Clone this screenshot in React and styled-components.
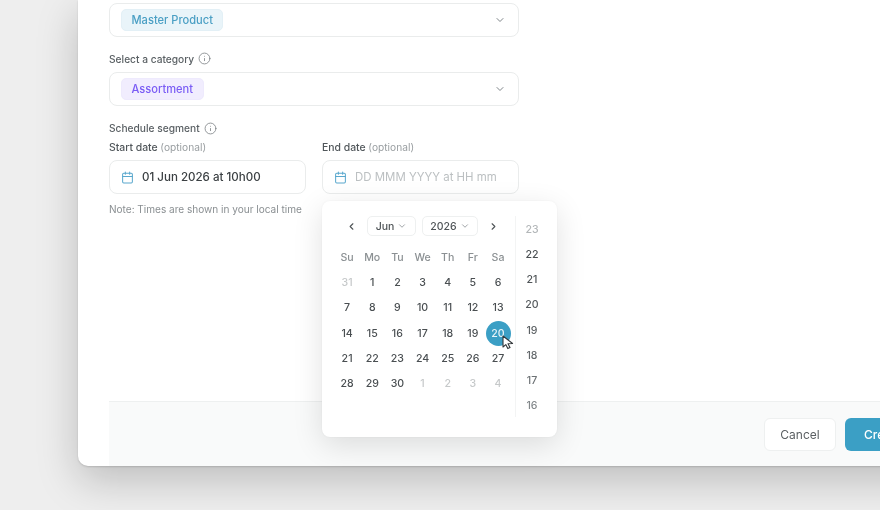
import React from "react";
import styled, { createGlobalStyle } from "styled-components";
import { Calendar, ChevronDown, ChevronLeft, ChevronRight, Info } from "lucide-react";

const Global = createGlobalStyle`
  html, body { margin: 0; padding: 0; background: #eeeeee; }
  body { font-family: Inter, "Liberation Sans", sans-serif; overflow: hidden; }
`;

const Page = styled.div`
  width: 880px;
  height: 510px;
  overflow: hidden;
  background: #eeeeee;
  filter: blur(0.6px);
`;

const Modal = styled.div`
  position: relative;
  width: 860px;
  margin-left: 78px;
  height: 466px;
  box-sizing: border-box;
  padding: 2.5px 0 0 31px;
  display: flex;
  flex-direction: column;
  background: #fff;
  border-radius: 0 0 10px 10px;
  box-shadow: 0 14px 42px rgba(0, 0, 0, 0.21), 0 1px 2px rgba(0, 0, 0, 0.14);
`;

const Form = styled.div`
  width: 410px;
  display: flex;
  flex-direction: column;
`;

const SelectBox = styled.div`
  height: 34.5px;
  box-sizing: border-box;
  border: 1px solid #eaecec;
  border-radius: 8px;
  display: flex;
  align-items: center;
  justify-content: space-between;
  padding: 0 12px 0 11px;
  color: #7f868a;
`;

const Tag = styled.span`
  height: 22px;
  display: inline-flex;
  align-items: center;
  padding: 0 9.5px;
  border-radius: 5px;
  font-size: 11.1px;
  font-weight: 500;
  color: ${(p) => p.$fg};
  background: ${(p) => p.$bg};
  border: 1px solid ${(p) => p.$line};
  box-sizing: border-box;
`;

const GroupLabel = styled.div`
  display: flex;
  align-items: center;
  gap: 4px;
  height: 14px;
  margin: ${(p) => p.$top}px 0 ${(p) => p.$bottom}px;
  font-size: 10.2px;
  font-weight: 500;
  color: #5a6064;
`;

const InfoIcon = styled(Info)`
  width: 13px;
  height: 13px;
  color: #7c8185;
  stroke-width: 1.5;
`;

const DateRow = styled.div`
  display: flex;
  justify-content: space-between;
`;

const DateField = styled.div`
  width: 197px;
`;

const FieldLabel = styled.div`
  height: 14px;
  margin-bottom: 6px;
  font-size: 10.4px;
  line-height: 14px;
  font-weight: 500;
  color: #51575b;
  span {
    font-size: 10.2px;
    font-weight: 400;
    color: #999ea1;
  }
`;

const DateInput = styled.div`
  height: 34px;
  box-sizing: border-box;
  border: 1px solid #eaecec;
  border-radius: 8px;
  display: flex;
  align-items: center;
  gap: 8px;
  padding-left: 11px;
  font-size: ${(p) => (p.$empty ? "11.45px" : "11.55px")};
  font-weight: ${(p) => (p.$empty ? 400 : 500)};
  color: ${(p) => (p.$empty ? "#bcc0c2" : "#3b4043")};
  svg {
    width: 13px;
    height: 13px;
    flex: none;
    color: #5aa8cd;
    stroke-width: 1.9;
  }
`;

const Note = styled.div`
  margin-top: 8px;
  height: 14px;
  line-height: 14px;
  font-size: 10.05px;
  color: #8a8f92;
`;

const Footer = styled.div`
  margin-top: auto;
  height: 65px;
  box-sizing: border-box;
  border-top: 1px solid #eef0f0;
  background: #f9fafa;
  border-radius: 0 0 10px 0;
  display: flex;
  align-items: center;
  padding: 1px 0 0 655px;
  gap: 9px;
`;

const Button = styled.div`
  height: 33px;
  box-sizing: border-box;
  border-radius: 6px;
  font-size: 12px;
  display: flex;
  align-items: center;
  flex: none;
  ${(p) =>
    p.$primary
      ? `width: 90px; padding-left: 19px; background: #3b9fc5; color: #fff; font-weight: 500;`
      : `width: 72px; justify-content: center; background: #fff; border: 1px solid #eef0f0; color: #5a5f62;`}
`;

const Popover = styled.div`
  position: absolute;
  left: 244px;
  top: 201px;
  width: 235px;
  height: 236px;
  box-sizing: border-box;
  background: #fff;
  border-radius: 8px;
  box-shadow: 0 8px 30px rgba(0, 0, 0, 0.12), 0 0 2px rgba(0, 0, 0, 0.05);
  display: flex;
  padding: 15px 0 0 12.5px;
`;

const MonthPanel = styled.div`
  width: 176px;
  margin-right: 4.5px;
`;

const NavBar = styled.div`
  height: 20px;
  display: flex;
  align-items: center;
  color: #4e5356;
  svg.nav {
    width: 11px;
    height: 11px;
    flex: none;
    stroke-width: 2.4;
  }
`;

const MonthSelect = styled.div`
  width: ${(p) => p.$w}px;
  height: 20px;
  margin-left: ${(p) => p.$left}px;
  box-sizing: border-box;
  border: 1px solid #eef0f0;
  border-radius: 5px;
  display: flex;
  align-items: center;
  justify-content: center;
  gap: 3px;
  font-size: 10.5px;
  font-weight: 500;
  color: #4f5457;
  svg {
    width: 10px;
    height: 10px;
    color: #8f9497;
  }
`;

const DayGrid = styled.div`
  display: grid;
  grid-template-columns: repeat(7, 25.17px);
  grid-auto-rows: 25.2px;
  margin-top: 9px;
`;

const Cell = styled.div`
  display: flex;
  align-items: center;
  justify-content: center;
  font-size: 10.6px;
  font-weight: 500;
  color: ${(p) =>
    p.$kind === "head" ? "#8b9093" : p.$kind === "out" ? "#c6c9ca" : "#4a4f52"};
`;

const SelectedDay = styled.div`
  width: 25px;
  height: 25px;
  border-radius: 50%;
  background: #3b9fc5;
  color: #e8f4f8;
  display: flex;
  align-items: center;
  justify-content: center;
`;

const Hours = styled.div`
  width: 33px;
  height: 201px;
  padding-top: 0.7px;
  border-left: 1px solid #f3f4f4;
  display: flex;
  flex-direction: column;
  align-items: center;
  box-sizing: border-box;
`;

const Hour = styled.div`
  height: 25.2px;
  flex: none;
  display: flex;
  align-items: center;
  font-size: 10.6px;
  font-weight: 500;
  color: ${(p) => p.$c};
`;

const Pointer = styled.svg`
  position: absolute;
  left: 180px;
  top: 134px;
  width: 12px;
  height: 15px;
`;

const heads = ["Su", "Mo", "Tu", "We", "Th", "Fr", "Sa"];
const days = [
  [31, true], ...Array.from({ length: 30 }, (_, i) => [i + 1, false]),
  [1, true], [2, true], [3, true], [4, true],
];
const hours = [
  [23, "#b3b7b9"], [22, "#4a4f52"], [21, "#505558"], [20, "#555a5d"],
  [19, "#5c6164"], [18, "#63686b"], [17, "#6d7275"], [16, "#82878a"],
];

export default function App() {
  return (
    <>
      <Global />
      <Page>
        <Modal>
          <Form>
            <SelectBox>
              <Tag $fg="#4a9fc4" $bg="#e9f4f9" $line="#e3f0f6">Master Product</Tag>
              <ChevronDown size={12} />
            </SelectBox>
            <GroupLabel $top={14.5} $bottom={6}>Select a category <InfoIcon /></GroupLabel>
            <SelectBox>
              <Tag $fg="#7a5cf5" $bg="#f1edfe" $line="#eeeafd">Assortment</Tag>
              <ChevronDown size={12} />
            </SelectBox>
            <GroupLabel $top={15} $bottom={5}>Schedule segment <InfoIcon /></GroupLabel>
            <DateRow>
              <DateField>
                <FieldLabel>Start date <span>(optional)</span></FieldLabel>
                <DateInput><Calendar />01 Jun 2026 at 10h00</DateInput>
              </DateField>
              <DateField>
                <FieldLabel>End date <span>(optional)</span></FieldLabel>
                <DateInput $empty><Calendar />DD MMM YYYY at HH mm</DateInput>
              </DateField>
            </DateRow>
            <Note>Note: Times are shown in your local time</Note>
          </Form>
          <Footer>
            <Button>Cancel</Button>
            <Button $primary>Create</Button>
          </Footer>
          <Popover>
            <MonthPanel>
              <NavBar>
                <ChevronLeft className="nav" style={{ marginLeft: 11 }} />
                <MonthSelect $w={49} $left={10.5}>Jun <ChevronDown /></MonthSelect>
                <MonthSelect $w={56} $left={6}>2026 <ChevronDown /></MonthSelect>
                <ChevronRight className="nav" style={{ marginLeft: 9.5 }} />
              </NavBar>
              <DayGrid>
                {heads.map((h) => <Cell key={h} $kind="head">{h}</Cell>)}
                {days.map(([d, out], i) => (
                  <Cell key={i} $kind={out ? "out" : "day"}>
                    {d === 20 && !out ? <SelectedDay>20</SelectedDay> : d}
                  </Cell>
                ))}
              </DayGrid>
            </MonthPanel>
            <Hours>
              {hours.map(([h, c]) => <Hour key={h} $c={c}>{h}</Hour>)}
            </Hours>
            <Pointer viewBox="0 0 12 15">
              <path d="M1 1 L1 12 L3.8 9.6 L5.8 13.6 L8 12.6 L6 8.8 L10.6 8.5 Z" fill="#fff" stroke="#33383b" strokeWidth="1.1" strokeLinejoin="round" />
            </Pointer>
          </Popover>
        </Modal>
      </Page>
    </>
  );
}
